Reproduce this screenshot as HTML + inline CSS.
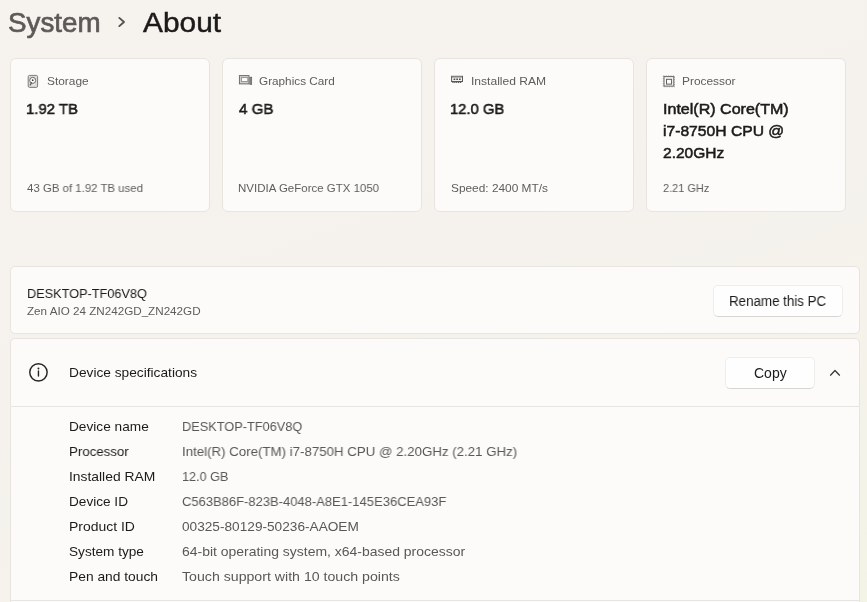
<!DOCTYPE html>
<html lang="en"><head><meta charset="utf-8"><title>About</title><style>
html,body{margin:0;padding:0}
body{width:867px;height:602px;overflow:hidden;background:#f5f2ed linear-gradient(160deg,#f6f3ee 0%,#f5f2ed 50%,#f3f3e6 100%);font-family:"Liberation Sans", sans-serif;position:relative}
.t{position:absolute;white-space:nowrap;line-height:1;transform-origin:0 0;display:block;will-change:transform}
.card{position:absolute;box-sizing:border-box;top:58px;width:200px;height:154px;background:#fcfbf9;border:1px solid #e8e5e1;border-radius:6px}
.panel{position:absolute;box-sizing:border-box;left:10px;width:850px;background:#fcfbf9;border:1px solid #e8e5e1}
.btn{position:absolute;background:#fefefe;border:1px solid #efedea;border-bottom-color:#d8d6d3;border-radius:5px;box-sizing:border-box}
svg{position:absolute;left:0;top:0;overflow:visible}
</style></head><body>
<div class="card" style="left:10px"></div>
<div class="card" style="left:222px"></div>
<div class="card" style="left:434px"></div>
<div class="card" style="left:646px"></div>
<div class="panel" style="top:266px;height:68px;border-radius:5px"></div>
<div class="panel" style="top:338px;height:69px;border-radius:5px 5px 0 0"></div>
<div class="panel" style="top:407px;height:194px;border-top:none"></div>
<div class="panel" style="top:601px;height:10px;border-top:none"></div>
<div class="btn" style="left:713px;top:285px;width:130px;height:32px"></div>
<div class="btn" style="left:725px;top:357px;width:90px;height:32px"></div>

<svg width="867" height="602" viewBox="0 0 867 602" fill="none">
 <!-- breadcrumb chevron -->
 <path d="M119.3 17.9 L124 22 L119.3 26.1" stroke="#55524f" stroke-width="1.9" stroke-linecap="round" stroke-linejoin="round"/>
 <!-- storage icon -->
 <rect x="28.2" y="75.4" width="9.4" height="12" rx="1.3" fill="#dddbd9" stroke="#807e7c" stroke-width="1"/>
 <circle cx="32.7" cy="80.4" r="3" fill="#fdfdfd" stroke="#6a6866" stroke-width="1"/>
 <circle cx="32.7" cy="80.2" r="0.9" fill="#3c3b3a"/>
 <path d="M31.6 82.6 L30.2 85" stroke="#5e5c5a" stroke-width="1.2" stroke-linecap="round"/>
 <path d="M33.2 85.3 L34.6 84" stroke="#fbfbfb" stroke-width="1" stroke-linecap="round"/>
 <!-- graphics icon -->
 <rect x="239.4" y="75.6" width="9.6" height="8.3" fill="#cfcdcb" stroke="#666462" stroke-width="0.9"/>
 <rect x="241.4" y="77.7" width="6.4" height="3.7" fill="#fdfdfd" stroke="#7b7977" stroke-width="0.7"/>
 <rect x="249.9" y="77.2" width="1.8" height="7.2" fill="#8f8d8b" stroke="#5f5d5b" stroke-width="0.7"/>
 <!-- ram icon -->
 <rect x="451.6" y="76.3" width="10.9" height="5.2" fill="#f4f3f1" stroke="#5a5856" stroke-width="1"/>
 <path d="M452 77.2 h10" stroke="#9a9896" stroke-width="1"/>
 <path d="M453.6 79.2 h1.7 M456.3 79.2 h1.7 M459 79.2 h1.7" stroke="#4e4c4a" stroke-width="1.5"/>
 <path d="M452.3 82.5 h9.6" stroke="#5e5c5a" stroke-width="1.2" stroke-dasharray="1.3 0.6"/>
 <!-- cpu icon -->
 <rect x="664" y="76.6" width="9.8" height="9.5" fill="#fbfaf9" stroke="#646260" stroke-width="1"/>
 <rect x="663.3" y="75.9" width="11.2" height="10.9" stroke="#868482" stroke-width="0.7" stroke-dasharray="1.1 1.3"/>
 <rect x="666.5" y="79.3" width="5.1" height="4.8" fill="#fdfdfd" stroke="#605e5c" stroke-width="1"/>
 <!-- info icon -->
 <circle cx="38.45" cy="372.35" r="8.7" stroke="#262524" stroke-width="1.45"/>
 <circle cx="38.45" cy="368.5" r="0.95" fill="#262524"/>
 <path d="M38.45 371 V376" stroke="#262524" stroke-width="1.4" stroke-linecap="round"/>
 <!-- chevron up -->
 <path d="M830.5 375.2 L835 370.5 L839.5 375.2" stroke="#363534" stroke-width="1.25" stroke-linecap="round" stroke-linejoin="round"/>
</svg>

<span class="t" style="left:8px;top:10px;font-size:27px;color:#5c5956;-webkit-text-stroke:0.65px currentColor;transform:scaleX(1.0282)">System</span>
<span class="t" style="left:143px;top:10px;font-size:27px;color:#1c1b1a;-webkit-text-stroke:0.46px currentColor;transform:scaleX(1.1064)">About</span>
<span class="t" style="left:47px;top:76px;font-size:11.5px;color:#5f5c59;transform:scaleX(1.0340)">Storage</span>
<span class="t" style="left:26px;top:101px;font-size:15.5px;color:#1c1b1a;-webkit-text-stroke:0.55px currentColor;transform:scaleX(0.9607)">1.92 TB</span>
<span class="t" style="left:27px;top:183px;font-size:11.5px;color:#5f5c59;transform:scaleX(0.9931)">43 GB of 1.92 TB used</span>
<span class="t" style="left:259px;top:76px;font-size:11.5px;color:#5f5c59;transform:scaleX(1.0218)">Graphics Card</span>
<span class="t" style="left:239px;top:101px;font-size:15.5px;color:#1c1b1a;-webkit-text-stroke:0.55px currentColor;transform:scaleX(0.9755)">4 GB</span>
<span class="t" style="left:238px;top:183px;font-size:11.5px;color:#5f5c59;transform:scaleX(0.9989)">NVIDIA GeForce GTX 1050</span>
<span class="t" style="left:471px;top:76px;font-size:11.5px;color:#5f5c59;transform:scaleX(1.0488)">Installed RAM</span>
<span class="t" style="left:450px;top:101px;font-size:15.5px;color:#1c1b1a;-webkit-text-stroke:0.55px currentColor;transform:scaleX(0.9547)">12.0 GB</span>
<span class="t" style="left:451px;top:183px;font-size:11.5px;color:#5f5c59;transform:scaleX(1.0321)">Speed: 2400 MT/s</span>
<span class="t" style="left:682px;top:76px;font-size:11.5px;color:#5f5c59;transform:scaleX(1.0350)">Processor</span>
<span class="t" style="left:663px;top:101px;font-size:15.5px;color:#1c1b1a;-webkit-text-stroke:0.55px currentColor;transform:scaleX(1.0352)">Intel(R) Core(TM)</span>
<span class="t" style="left:663px;top:123px;font-size:15.5px;color:#1c1b1a;-webkit-text-stroke:0.55px currentColor;transform:scaleX(1.0101)">i7-8750H CPU @</span>
<span class="t" style="left:663px;top:145px;font-size:15.5px;color:#1c1b1a;-webkit-text-stroke:0.55px currentColor;transform:scaleX(1.0008)">2.20GHz</span>
<span class="t" style="left:663px;top:183px;font-size:11.5px;color:#5f5c59;transform:scaleX(0.9542)">2.21 GHz</span>
<span class="t" style="left:27px;top:287px;font-size:13.5px;color:#1c1b1a;transform:scaleX(0.9420)">DESKTOP-TF06V8Q</span>
<span class="t" style="left:27px;top:306px;font-size:11.5px;color:#5f5c59;transform:scaleX(1.0132)">Zen AIO 24 ZN242GD_ZN242GD</span>
<span class="t" style="left:729px;top:294px;font-size:14px;color:#1c1b1a;transform:scaleX(0.9531)">Rename this PC</span>
<span class="t" style="left:69px;top:366px;font-size:13.5px;color:#1c1b1a;transform:scaleX(1.0159)">Device specifications</span>
<span class="t" style="left:754px;top:366px;font-size:14px;color:#1c1b1a;transform:scaleX(1.0000)">Copy</span>
<span class="t" style="left:69px;top:420px;font-size:13.5px;color:#1c1b1a;transform:scaleX(1.0121)">Device name</span>
<span class="t" style="left:69px;top:445px;font-size:13.5px;color:#1c1b1a;transform:scaleX(0.9835)">Processor</span>
<span class="t" style="left:69px;top:470px;font-size:13.5px;color:#1c1b1a;transform:scaleX(1.0265)">Installed RAM</span>
<span class="t" style="left:69px;top:495px;font-size:13.5px;color:#1c1b1a;transform:scaleX(1.0078)">Device ID</span>
<span class="t" style="left:69px;top:520px;font-size:13.5px;color:#1c1b1a;transform:scaleX(1.0333)">Product ID</span>
<span class="t" style="left:69px;top:545px;font-size:13.5px;color:#1c1b1a;transform:scaleX(1.0088)">System type</span>
<span class="t" style="left:69px;top:570px;font-size:13.5px;color:#1c1b1a;transform:scaleX(1.0226)">Pen and touch</span>
<span class="t" style="left:182px;top:420px;font-size:13.5px;color:#5a5755;transform:scaleX(0.9452)">DESKTOP-TF06V8Q</span>
<span class="t" style="left:182px;top:445px;font-size:13.5px;color:#5a5755;transform:scaleX(0.9835)">Intel(R) Core(TM) i7-8750H CPU @ 2.20GHz (2.21 GHz)</span>
<span class="t" style="left:182px;top:470px;font-size:13.5px;color:#5a5755;transform:scaleX(0.9374)">12.0 GB</span>
<span class="t" style="left:182px;top:495px;font-size:13.5px;color:#5a5755;transform:scaleX(0.9619)">C563B86F-823B-4048-A8E1-145E36CEA93F</span>
<span class="t" style="left:182px;top:520px;font-size:13.5px;color:#5a5755;transform:scaleX(1.0112)">00325-80129-50236-AAOEM</span>
<span class="t" style="left:182px;top:545px;font-size:13.5px;color:#5a5755;transform:scaleX(1.0334)">64-bit operating system, x64-based processor</span>
<span class="t" style="left:182px;top:570px;font-size:13.5px;color:#5a5755;transform:scaleX(1.0480)">Touch support with 10 touch points</span>
</body></html>
